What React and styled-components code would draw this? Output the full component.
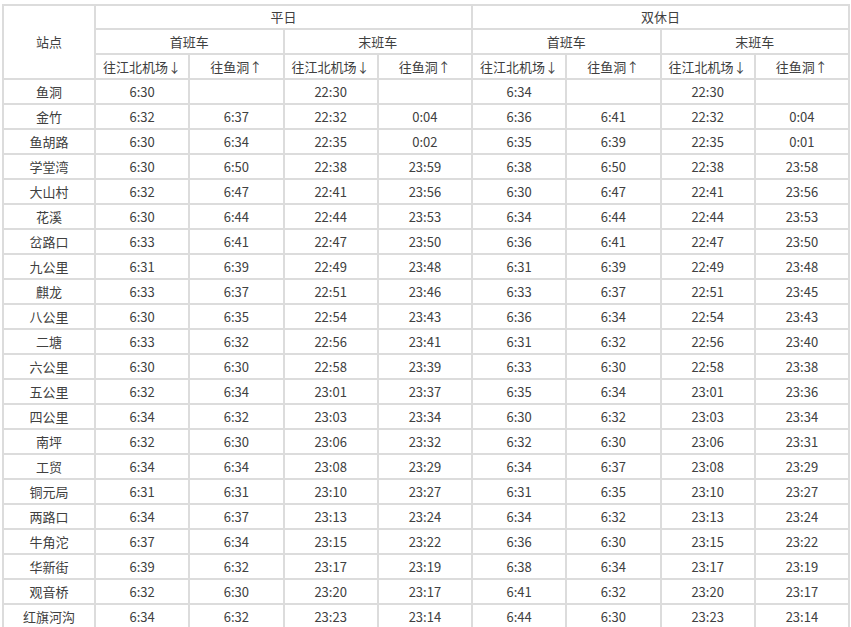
import styled, { createGlobalStyle } from 'styled-components';

const GlobalStyle = createGlobalStyle`
  body {
    margin: 0;
    background: #fff;
    font-family: "Noto Sans CJK SC", "Noto Sans", sans-serif;
  }
`;

const Wrapper = styled.div`
  padding: 4px 0 0 2px;
`;

const Table = styled.table`
  width: 848px;
  table-layout: fixed;
  border-collapse: separate;
  border-spacing: 0;
  border-top: 2px solid #dcdcdc;
  border-left: 2px solid #dcdcdc;
  color: #404040;
  font-size: 13px;
`;

const StationCol = styled.col`
  width: 92px;
`;

const cellStyle = `
  box-sizing: border-box;
  padding: 0;
  text-align: center;
  vertical-align: middle;
  white-space: nowrap;
  border-right: 2px solid #dcdcdc;
  border-bottom: 2px solid #dcdcdc;
  line-height: 20px;
`;

const HeadCell = styled.th`
  ${cellStyle}
  height: ${(p) => p.$h || 25}px;
  font-weight: normal;
`;

const Cell = styled.td`
  ${cellStyle}
  height: 25px;
`;

const directions = ['往江北机场↓', '往鱼洞↑'];

const rows = [
  ['鱼洞', '6:30', '', '22:30', '', '6:34', '', '22:30', ''],
  ['金竹', '6:32', '6:37', '22:32', '0:04', '6:36', '6:41', '22:32', '0:04'],
  ['鱼胡路', '6:30', '6:34', '22:35', '0:02', '6:35', '6:39', '22:35', '0:01'],
  ['学堂湾', '6:30', '6:50', '22:38', '23:59', '6:38', '6:50', '22:38', '23:58'],
  ['大山村', '6:32', '6:47', '22:41', '23:56', '6:30', '6:47', '22:41', '23:56'],
  ['花溪', '6:30', '6:44', '22:44', '23:53', '6:34', '6:44', '22:44', '23:53'],
  ['岔路口', '6:33', '6:41', '22:47', '23:50', '6:36', '6:41', '22:47', '23:50'],
  ['九公里', '6:31', '6:39', '22:49', '23:48', '6:31', '6:39', '22:49', '23:48'],
  ['麒龙', '6:33', '6:37', '22:51', '23:46', '6:33', '6:37', '22:51', '23:45'],
  ['八公里', '6:30', '6:35', '22:54', '23:43', '6:36', '6:34', '22:54', '23:43'],
  ['二塘', '6:33', '6:32', '22:56', '23:41', '6:31', '6:32', '22:56', '23:40'],
  ['六公里', '6:30', '6:30', '22:58', '23:39', '6:33', '6:30', '22:58', '23:38'],
  ['五公里', '6:32', '6:34', '23:01', '23:37', '6:35', '6:34', '23:01', '23:36'],
  ['四公里', '6:34', '6:32', '23:03', '23:34', '6:30', '6:32', '23:03', '23:34'],
  ['南坪', '6:32', '6:30', '23:06', '23:32', '6:32', '6:30', '23:06', '23:31'],
  ['工贸', '6:34', '6:34', '23:08', '23:29', '6:34', '6:37', '23:08', '23:29'],
  ['铜元局', '6:31', '6:31', '23:10', '23:27', '6:31', '6:35', '23:10', '23:27'],
  ['两路口', '6:34', '6:37', '23:13', '23:24', '6:34', '6:32', '23:13', '23:24'],
  ['牛角沱', '6:37', '6:34', '23:15', '23:22', '6:36', '6:30', '23:15', '23:22'],
  ['华新街', '6:39', '6:32', '23:17', '23:19', '6:38', '6:34', '23:17', '23:19'],
  ['观音桥', '6:32', '6:30', '23:20', '23:17', '6:41', '6:32', '23:20', '23:17'],
  ['红旗河沟', '6:34', '6:32', '23:23', '23:14', '6:44', '6:30', '23:23', '23:14'],
];

const App = () => {
  return (
    <Wrapper>
      <GlobalStyle />
      <Table>
        <colgroup>
          <StationCol />
          {Array.from({ length: 8 }).map((_, i) => (
            <col key={i} />
          ))}
        </colgroup>
        <thead>
          <tr>
            <HeadCell rowSpan={3}>站点</HeadCell>
            <HeadCell $h={24} colSpan={4}>平日</HeadCell>
            <HeadCell $h={24} colSpan={4}>双休日</HeadCell>
          </tr>
          <tr>
            {['首班车', '末班车', '首班车', '末班车'].map((t, i) => (
              <HeadCell key={i} colSpan={2}>
                {t}
              </HeadCell>
            ))}
          </tr>
          <tr>
            {Array.from({ length: 4 }).flatMap((_, i) =>
              directions.map((d, j) => <HeadCell key={`${i}-${j}`}>{d}</HeadCell>)
            )}
          </tr>
        </thead>
        <tbody>
          {rows.map((row) => (
            <tr key={row[0]}>
              {row.map((v, i) => (
                <Cell key={i}>{v}</Cell>
              ))}
            </tr>
          ))}
        </tbody>
      </Table>
    </Wrapper>
  );
};

export default App;
